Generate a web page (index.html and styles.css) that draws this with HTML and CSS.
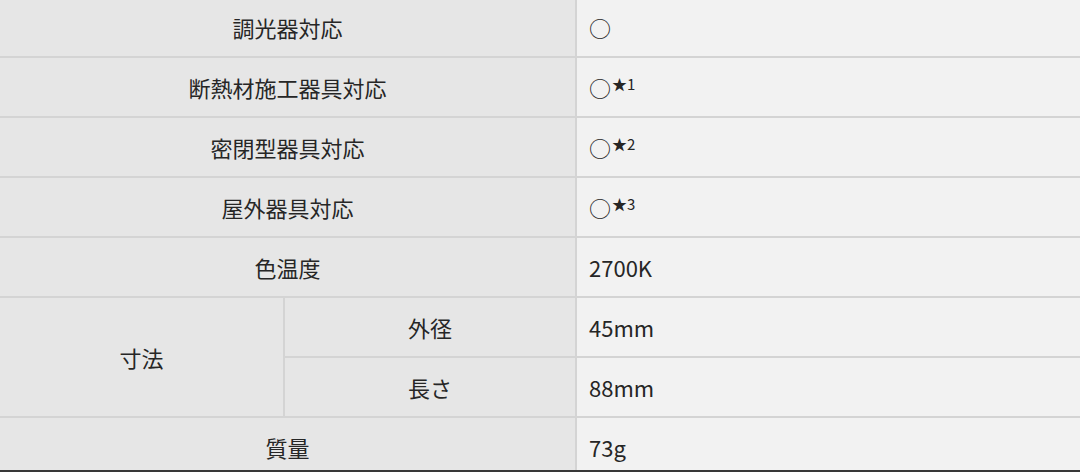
FILE: index.html
```html
<!DOCTYPE html>
<html lang="ja">
<head>
<meta charset="utf-8">
<link rel="stylesheet" href="styles.css">
</head>
<body>
<table class="spec">
  <colgroup><col class="col-group"><col class="col-sub"><col class="col-value"></colgroup>
  <tr><th colspan="2">調光器対応</th><td>○</td></tr>
  <tr><th colspan="2">断熱材施工器具対応</th><td>○<sup class="note">★1</sup></td></tr>
  <tr><th colspan="2">密閉型器具対応</th><td>○<sup class="note">★2</sup></td></tr>
  <tr><th colspan="2">屋外器具対応</th><td>○<sup class="note">★3</sup></td></tr>
  <tr><th colspan="2">色温度</th><td>2700K</td></tr>
  <tr><th rowspan="2" class="group">寸法</th><th class="sub">外径</th><td>45mm</td></tr>
  <tr><th class="sub">長さ</th><td>88mm</td></tr>
  <tr><th colspan="2">質量</th><td>73g</td></tr>
</table>
<div class="bottom-bar"></div>
</body>
</html>
```

FILE: styles.css
```css
html, body {
  margin: 0;
  padding: 0;
  background: #f2f2f2;
  overflow: hidden;
}
body {
  font-family: "Noto Sans CJK JP", "Noto Sans", sans-serif;
  color: #262626;
  font-size: 22px;
}
.spec {
  width: 1084px;
  margin-top: -4px;
  margin-left: -2px;
  border-collapse: collapse;
  table-layout: fixed;
}
.col-group { width: 285px; }
.col-sub { width: 292px; }
.col-value { width: 507px; }
.spec th, .spec td {
  border: 2px solid #d4d4d4;
  height: 60px;
  padding: 0;
  box-sizing: border-box;
  font-weight: normal;
  line-height: 1;
}
.spec th {
  background: #e6e6e6;
  text-align: center;
}
.spec td {
  background: #f2f2f2;
  text-align: left;
  padding-left: 12px;
}
.note {
  font-size: 15px;
  vertical-align: 7px;
  line-height: 0;
  margin-left: 1px;
}
.bottom-bar {
  position: fixed;
  left: 0;
  right: 0;
  bottom: 0;
  height: 2px;
  background: #383838;
}
```
